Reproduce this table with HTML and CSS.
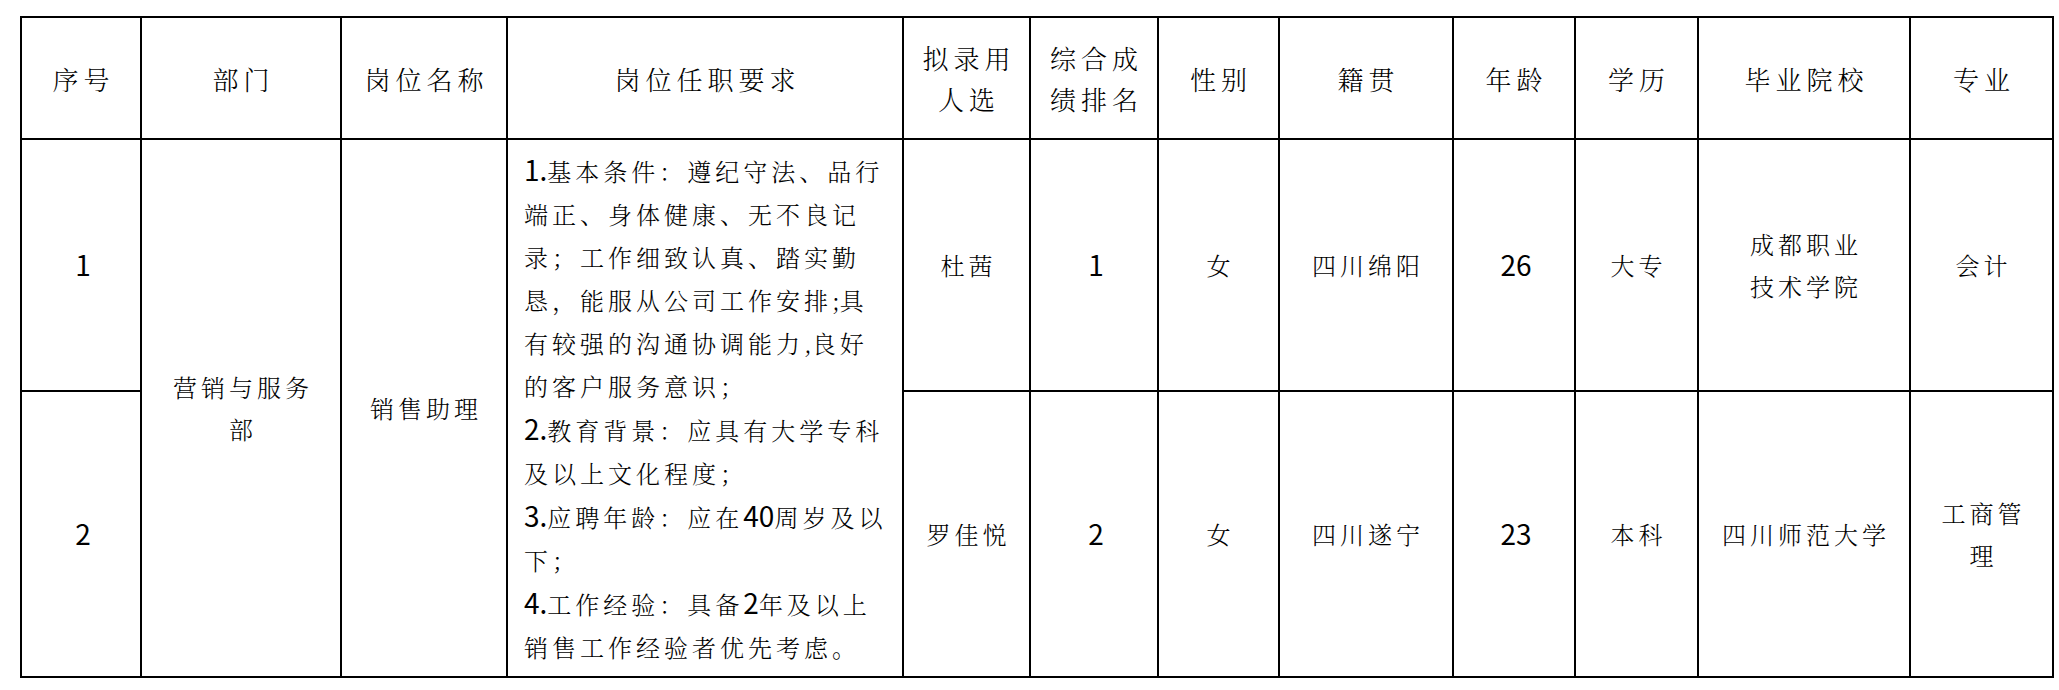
FILE: index.html
```html
<!DOCTYPE html>
<html lang="zh-CN">
<head>
<meta charset="utf-8">
<title>拟录用人员名单</title>
<link rel="stylesheet" href="styles.css">
</head>
<body>
<div class="page">
<table class="tbl">
<colgroup>
<col class="w-no"><col class="w-dept"><col class="w-post"><col class="w-req"><col class="w-name"><col class="w-rank"><col class="w-sex"><col class="w-home"><col class="w-age"><col class="w-edu"><col class="w-school"><col class="w-major">
</colgroup>
<thead>
<tr class="head">
<th>序号</th>
<th>部门</th>
<th>岗位名称</th>
<th>岗位任职要求</th>
<th>拟录用<br>人选</th>
<th>综合成<br>绩排名</th>
<th>性别</th>
<th>籍贯</th>
<th>年龄</th>
<th>学历</th>
<th>毕业院校</th>
<th>专业</th>
</tr>
</thead>
<tbody>
<tr class="row1">
<td><span class="n">1</span></td>
<td rowspan="2">营销与服务<br>部</td>
<td rowspan="2">销售助理</td>
<td rowspan="2" class="req"><span class="n">1.</span>基本条件：遵纪守法、品行<br>端正、身体健康、无不良记<br>录；工作细致认真、踏实勤<br>恳，能服从公司工作安排<span class="p">;</span>具<br>有较强的沟通协调能力<span class="p">,</span>良好<br>的客户服务意识；<br><span class="n">2.</span>教育背景：应具有大学专科<br>及以上文化程度；<br><span class="n">3.</span>应聘年龄：应在<span class="n">40</span>周岁及以<br>下；<br><span class="n">4.</span>工作经验：具备<span class="n">2</span>年及以上<br>销售工作经验者优先考虑。</td>
<td>杜茜</td>
<td><span class="n">1</span></td>
<td>女</td>
<td>四川绵阳</td>
<td><span class="n">26</span></td>
<td>大专</td>
<td>成都职业<br>技术学院</td>
<td>会计</td>
</tr>
<tr class="row2">
<td><span class="n">2</span></td>
<td>罗佳悦</td>
<td><span class="n">2</span></td>
<td>女</td>
<td>四川遂宁</td>
<td><span class="n">23</span></td>
<td>本科</td>
<td>四川师范大学</td>
<td>工商管<br>理</td>
</tr>
</tbody>
</table>
</div>
</body>
</html>
```
FILE: styles.css
```css
html, body {
  margin: 0;
  padding: 0;
  background: #ffffff;
}

body {
  font-family: "Noto Serif CJK SC", "Noto Sans CJK SC", "Noto Sans", sans-serif;
  color: #000000;
}

.page {
  padding: 16px 0 0 20px;
}

.tbl {
  border-collapse: collapse;
  table-layout: fixed;
  width: 2034px;
}

.tbl th,
.tbl td {
  border: 2px solid #000000;
  padding: 0 0 0 4px;
  text-align: center;
  vertical-align: middle;
  font-size: 24px;
  letter-spacing: 4px;
  line-height: 42px;
  font-weight: 300;
  white-space: nowrap;
}

.tbl th {
  font-size: 26px;
  letter-spacing: 5px;
  padding-left: 5px;
  line-height: 41px;
}

.tbl td.req {
  text-align: left;
  padding: 0 0 0 16px;
  line-height: 43px;
}

.n {
  font-family: "Noto Sans CJK SC", "Open Sans", sans-serif;
  font-size: 28px;
  letter-spacing: 0;
  font-weight: 400;
}

.p {
  letter-spacing: 0;
}

.head th { height: 120px; }
.row1 td { height: 250px; }
.row2 td { height: 284px; }

.w-no { width: 120px; }
.w-dept { width: 200px; }
.w-post { width: 166px; }
.w-req { width: 396px; }
.w-name { width: 127px; }
.w-rank { width: 128px; }
.w-sex { width: 121px; }
.w-home { width: 174px; }
.w-age { width: 122px; }
.w-edu { width: 123px; }
.w-school { width: 212px; }
.w-major { width: 143px; }
```
